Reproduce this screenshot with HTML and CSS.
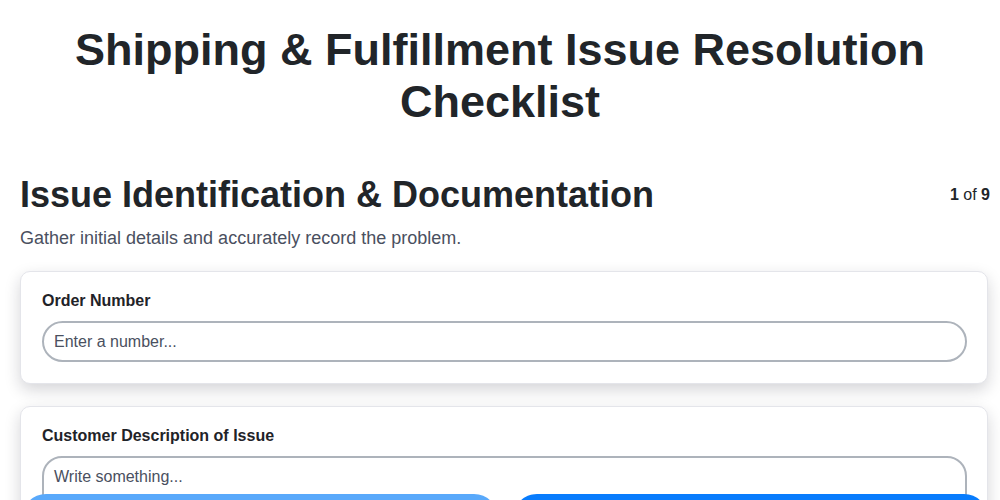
FILE: index.html
```html
<!DOCTYPE html>
<html lang="en">
<head>
<meta charset="utf-8">
<title>Shipping &amp; Fulfillment Issue Resolution Checklist</title>
<link rel="stylesheet" href="styles.css">
</head>
<body>
<main class="page">
  <h1 class="title">Shipping &amp; Fulfillment Issue Resolution Checklist</h1>
  <section class="step">
    <header class="step-head">
      <h2 class="step-title">Issue Identification &amp; Documentation</h2>
      <div class="step-count"><b>1</b> of <b>9</b></div>
    </header>
    <p class="step-desc">Gather initial details and accurately record the problem.</p>
    <div class="card">
      <label class="field-label" for="order">Order Number</label>
      <input class="field-input" id="order" type="text" placeholder="Enter a number...">
    </div>
    <div class="card">
      <label class="field-label" for="desc">Customer Description of Issue</label>
      <textarea class="field-area" id="desc" rows="4" placeholder="Write something..."></textarea>
    </div>
  </section>
</main>
<nav class="nav-bar">
  <button class="btn btn-prev" type="button" aria-label="Previous"></button>
  <button class="btn btn-next" type="button" aria-label="Next"></button>
</nav>
</body>
</html>
```
FILE: styles.css
```css
* { box-sizing: border-box; }
html, body { margin: 0; padding: 0; background: #ffffff; }
body {
  font-family: "Liberation Sans", Arial, sans-serif;
  color: #212529;
}
.page {
  padding: 24px 10px 80px 10px;
}
.title {
  margin: 0 0 45px 0;
  text-align: center;
  font-size: 45px;
  line-height: 52px;
  font-weight: 700;
  color: #212529;
}
.step {
  padding-left: 10px;
}
.step-head {
  display: flex;
  justify-content: space-between;
  align-items: center;
}
.step-title {
  margin: 0;
  font-size: 36px;
  line-height: 44px;
  font-weight: 700;
  color: #212529;
}
.step-count {
  font-size: 16px;
  color: #212529;
}
.step-desc {
  margin: 9px 0 21px 0;
  font-size: 18px;
  line-height: 24px;
  color: #4a5060;
}
.card {
  margin: 0 2px 22px 0;
  padding: 19px 20px 21px 21px;
  background: #ffffff;
  border: 1px solid #e4e5ea;
  border-radius: 10px;
  box-shadow: 0 6px 16px rgba(20, 20, 40, 0.18);
}
.field-label {
  display: block;
  margin-bottom: 10px;
  font-size: 16px;
  line-height: 20px;
  font-weight: 700;
  color: #1f2328;
}
.field-input, .field-area {
  display: block;
  width: 100%;
  font-family: "Liberation Sans", Arial, sans-serif;
  font-size: 16px;
  color: #212529;
  background: #ffffff;
  border: 2px solid #adb3bb;
  outline: none;
}
.field-input {
  height: 41px;
  padding: 0 10px;
  border-radius: 21px;
}
.field-area {
  padding: 9px 10px;
  border-radius: 20px;
  line-height: 20px;
  resize: none;
}
.field-input::placeholder, .field-area::placeholder {
  color: #4a5060;
  opacity: 1;
}
.nav-bar {
  position: fixed;
  left: 22px;
  right: 12px;
  top: 494px;
  display: flex;
  gap: 15px;
}
.btn {
  flex: 1;
  height: 48px;
  border: none;
  border-radius: 24px;
  color: #ffffff;
  font-family: "Liberation Sans", Arial, sans-serif;
  font-size: 16px;
  font-weight: 700;
}
.btn-prev { background: #59a9fb; }
.btn-next { background: #087cfd; }
```
